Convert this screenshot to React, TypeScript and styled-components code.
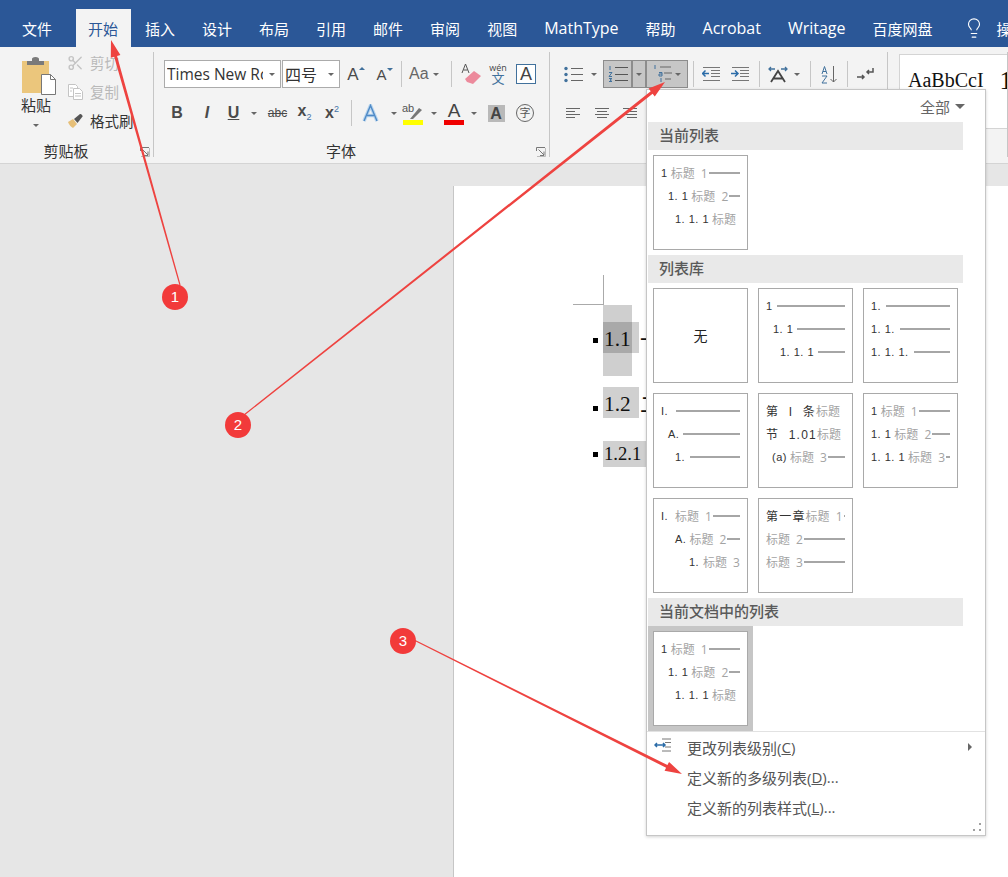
import React from 'react'
import styled, { createGlobalStyle } from 'styled-components'
import { Lightbulb, Scissors } from 'lucide-react'

const UI_FONT = `"Open Sans", "Noto Sans CJK SC", sans-serif`
const SERIF = `"Liberation Serif", "Noto Sans CJK SC", serif`

const GlobalStyle = createGlobalStyle`
html, body {
  margin: 0;
  padding: 0;
  overflow: hidden;
  background: #e6e6e6;
}
* { box-sizing: border-box; }
`

const Window = styled.div`
position: relative;
width: 1008px;
height: 877px;
overflow: hidden;
display: flex;
flex-direction: column;
font-family: ${UI_FONT};
color: #444;
`

const TabBar = styled.div`
height: 47px;
flex: none;
background: #2b5797;
display: flex;
align-items: flex-end;
gap: 2px;
padding-left: 9.5px;
overflow: hidden;
`

const Tab = styled.div<{ $active?: boolean; $gapAfter?: number; $latin?: boolean }>`
height: 38px;
padding: 0 12.5px;
flex: none;
display: flex;
align-items: center;
font-size: ${p => (p.$latin ? 16 : 15)}px;
white-space: nowrap;
margin-right: ${p => p.$gapAfter ?? 0}px;
color: ${p => (p.$active ? '#2b5797' : '#fff')};
background: ${p => (p.$active ? '#f3f3f3' : 'transparent')};
`

const HelpIcon = styled.div`
margin: 0 -3px 0 16px;
height: 38px;
display: flex;
align-items: center;
color: #fff;
`

const Ribbon = styled.div`
height: 117px;
flex: none;
display: flex;
background: #f3f3f3;
border-bottom: 1px solid #d4d4d4;
`

const Group = styled.div<{ $w: number; $pl?: number }>`
position: relative;
width: ${p => p.$w}px;
flex: none;
padding: 13px 0 0 ${p => p.$pl ?? 0}px;
&::after {
  content: '';
  position: absolute;
  right: 0;
  top: 5px;
  bottom: 6px;
  width: 1px;
  background: #c6c6c6;
}
`

const GroupLabel = styled.div`
position: absolute;
left: 0;
right: 22px;
bottom: 1px;
height: 22px;
line-height: 22px;
text-align: center;
font-size: 15px;
color: #333;
`

const Launcher = styled.svg`
position: absolute;
right: 4px;
bottom: 6px;
`

const ToolRow = styled.div<{ $mt?: number }>`
height: 28px;
display: flex;
align-items: center;
margin-top: ${p => p.$mt ?? 0}px;
`

const ClipboardBody = styled.div`
display: flex;
margin-top: -12px;
`

const PasteColumn = styled.div`
width: 67px;
padding: 8px 0 0 21px;
font-size: 15px;
color: #333;
`

const PasteLabel = styled.div`
margin-top: -2px;
line-height: 22px;
`

const PasteCaret = styled.div`
width: 30px;
height: 18px;
display: flex;
align-items: center;
justify-content: center;
`

const SmallColumn = styled.div`
display: flex;
flex-direction: column;
`

const SmallTool = styled.div<{ $muted?: boolean }>`
height: 29px;
display: flex;
align-items: center;
gap: 6px;
font-size: 14.5px;
white-space: nowrap;
color: ${p => (p.$muted ? '#b9b9b9' : '#333')};
`

const SmallIcon = styled.div`
width: 17px;
display: flex;
justify-content: center;
color: #c4c4c4;
`

const Caret = styled.span<{ $size?: number }>`
display: inline-block;
width: 0;
height: 0;
border-left: ${p => p.$size ?? 3.5}px solid transparent;
border-right: ${p => p.$size ?? 3.5}px solid transparent;
border-top: ${p => p.$size ?? 3.5}px solid #666;
`

const Combo = styled.div<{ $w: number }>`
width: ${p => p.$w}px;
height: 28px;
margin-right: 1px;
flex: none;
background: #fff;
border: 1px solid #ababab;
display: flex;
align-items: center;
justify-content: space-between;
padding: 0 5px 0 2px;
font-size: 16px;
color: #333;
overflow: hidden;
white-space: nowrap;
`

const ComboText = styled.span<{ $w: number }>`
width: ${p => p.$w}px;
font-size: 15.5px;
overflow: hidden;
`

const Tool = styled.div<{ $w: number; $on?: boolean; $ml?: number }>`
width: ${p => p.$w}px;
height: 28px;
flex: none;
margin-left: ${p => p.$ml ?? 0}px;
display: flex;
align-items: center;
justify-content: center;
background: ${p => (p.$on ? '#c6c6c6' : 'transparent')};
border: ${p => (p.$on ? '1px solid #8c8c8c' : 'none')};
`

const Divider = styled.div<{ $ml: number; $mr?: number }>`
width: 1px;
height: 26px;
flex: none;
background: #c6c6c6;
margin-left: ${p => p.$ml}px;
margin-right: ${p => p.$mr ?? 0}px;
`

const Glyph = styled.span<{ $size?: number; $bold?: boolean; $italic?: boolean; $under?: boolean; $color?: string; $strike?: boolean }>`
font-family: "Liberation Sans", sans-serif;
font-size: ${p => p.$size ?? 15}px;
font-weight: ${p => (p.$bold ? 700 : 400)};
font-style: ${p => (p.$italic ? 'italic' : 'normal')};
text-decoration: ${p => (p.$under ? 'underline' : p.$strike ? 'line-through' : 'none')};
color: ${p => p.$color ?? '#4a4a4a'};
line-height: 1;
white-space: nowrap;
`

const Sub = styled.sub`
font-size: 9px;
color: #4472a8;
font-weight: 400;
`

const Sup = styled.sup`
font-size: 9px;
color: #4472a8;
font-weight: 400;
`

const SizeGlyph = styled.div`
display: flex;
align-items: flex-start;
gap: 0;
`

const SizeArrow = styled.span<{ $down?: boolean }>`
width: 0;
height: 0;
margin-top: 1px;
border-left: 3px solid transparent;
border-right: 3px solid transparent;
border-bottom: ${p => (p.$down ? 0 : 3)}px solid #41719c;
border-top: ${p => (p.$down ? 3 : 0)}px solid #41719c;
`

const BoxedA = styled.div`
width: 20px;
height: 20px;
border: 1px solid #41719c;
background: #fff;
font-family: "Liberation Sans", sans-serif;
font-size: 18px;
line-height: 18px;
text-align: center;
color: #444;
`

const ShadedA = styled.div`
width: 17px;
height: 17px;
background: #b9b9b9;
font-family: "Liberation Sans", sans-serif;
font-weight: 700;
font-size: 16px;
line-height: 17px;
text-align: center;
color: #444;
`

const CircledChar = styled.div`
width: 18px;
height: 18px;
border: 1px solid #666;
border-radius: 50%;
font-size: 11px;
line-height: 15px;
text-align: center;
color: #555;
`

const ColorA = styled.div<{ $bar: string }>`
width: 20px;
height: 23px;
display: flex;
flex-direction: column;
align-items: center;
font-family: "Liberation Sans", sans-serif;
font-size: 19px;
line-height: 18px;
color: #444;
&::after {
  content: '';
  width: 20px;
  height: 5px;
  background: ${p => p.$bar};
}
`

const WenChar = styled.div`
display: flex;
flex-direction: column;
align-items: center;
font-size: 9px;
line-height: 8px;
color: #444;
`

const WenBottom = styled.span`
font-size: 13px;
line-height: 13px;
color: #41719c;
`

const StyleGallery = styled.div`
margin: -6px 0 0 11px;
height: 75px;
background: #fff;
border: 1px solid #d4d4d4;
border-right: none;
padding: 14px 0 0 8px;
font-family: ${SERIF};
font-size: 20px;
color: #111;
display: flex;
align-items: flex-start;
gap: 16px;
white-space: nowrap;
overflow: hidden;
`

const StyleNumber = styled.span`
font-size: 26px;
line-height: 24px;
`

const Workspace = styled.div`
flex: 1;
padding: 22px 0 0 453px;
background: #e6e6e6;
overflow: hidden;
`

const Page = styled.div`
height: 100%;
background: #fff;
border-left: 1px solid #c6c6c6;
padding-top: 136px;
position: relative;
`

const CropMark = styled.div`
width: 31px;
height: 30px;
position: absolute;
left: 119px;
top: 89px;
border-right: 1px solid #aaa;
border-bottom: 1px solid #aaa;
`

const DocLine = styled.div<{ $top: number }>`
display: flex;
align-items: center;
margin: ${p => p.$top}px 0 0 139px;
font-family: ${SERIF};
color: #111;
white-space: nowrap;
`

const Bullet = styled.span<{ $drop?: number }>`
width: 5px;
height: 5px;
background: #000;
flex: none;
margin-right: 5px;
margin-top: ${p => (p.$drop ?? 0) * 2}px;
`

const NumberMark = styled.span<{ $size: number; $h: number; $w: number; $drop?: number }>`
position: relative;
width: ${p => p.$w}px;
height: ${p => p.$h}px;
line-height: ${p => p.$h + (p.$drop ?? 0)}px;
padding-left: 1px;
font-size: ${p => p.$size}px;
background: #d0d0d0;
white-space: nowrap;
flex: none;
`

const ColumnSelect = styled.span`
position: absolute;
left: 0;
top: -17px;
width: 29px;
height: 71px;
background: rgba(0, 0, 0, 0.19);
`

const HeadingText = styled.span`
margin-left: 1px;
font-size: 21px;
font-family: "Noto Sans CJK SC", sans-serif;
`

const Menu = styled.div`
position: absolute;
left: 646px;
top: 89px;
width: 340px;
height: 747px;
background: #fff;
border: 1px solid #c6c6c6;
box-shadow: 0 1px 3px rgba(0, 0, 0, 0.18);
display: flex;
flex-direction: column;
`

const MenuFilter = styled.div`
height: 32px;
flex: none;
display: flex;
align-items: center;
justify-content: flex-end;
gap: 5px;
padding: 0 20px 0 0;
font-size: 15px;
color: #666;
`

const SectionHeader = styled.div`
height: 28px;
flex: none;
margin-left: 1px;
width: 315px;
background: #e9e9e9;
padding-left: 11px;
line-height: 26px;
font-size: 15px;
font-weight: 500;
color: #5a5a5a;
`

const Gallery = styled.div`
flex: none;
margin-left: 1px;
padding: 5px;
display: grid;
grid-template-columns: repeat(3, 95px);
gap: 10px;
`

const SelectedCell = styled.div`
flex: none;
margin-left: 1px;
width: 105px;
padding: 5px;
background: #c6c6c6;
`

const Thumb = styled.div<{ $center?: boolean }>`
width: 95px;
height: 95px;
background: #fff;
border: 1px solid #a9a9a9;
padding: ${p => (p.$center ? 0 : 5)}px 7px ${p => (p.$center ? 2 : 0)}px;
display: flex;
flex-direction: column;
justify-content: ${p => (p.$center ? 'center' : 'flex-start')};
align-items: ${p => (p.$center ? 'center' : 'stretch')};
font-size: 14px;
color: #222;
`

const ThumbRow = styled.div<{ $indent: number }>`
height: 23px;
padding-left: ${p => p.$indent}px;
display: flex;
align-items: center;
white-space: nowrap;
overflow: hidden;
`

const ThumbNum = styled.span<{ $cjk?: boolean; $w?: number }>`
flex: none;
min-width: ${p => p.$w ?? 0}px;
font-family: "Liberation Sans", "Noto Sans CJK SC", sans-serif;
font-size: ${p => (p.$cjk ? 12 : 11)}px;
letter-spacing: ${p => (p.$cjk ? 1.2 : 0.5)}px;
word-spacing: ${p => (p.$cjk ? 5 : 0)}px;
margin-right: ${p => (p.$cjk ? 0 : 3)}px;
color: #333;
`

const ThumbLabel = styled.span`
flex: none;
font-size: 12px;
color: #a3a3a3;
word-spacing: 3px;
`

const ThumbLine = styled.span`
flex: 1;
min-width: 0;
height: 2px;
margin-left: 1px;
background: #a6a6a6;
`

const MenuFooter = styled.div`
flex: 1;
position: relative;
border-top: 1px solid #e2e2e2;
`

const MenuItem = styled.div`
height: 30px;
display: flex;
align-items: center;
padding-left: 40px;
font-size: 15px;
color: #555;
position: relative;
`

const MenuItemIcon = styled.svg`
position: absolute;
left: 7px;
top: 6px;
`

const SubmenuArrow = styled.span`
position: absolute;
right: 13px;
top: 11px;
border-top: 4px solid transparent;
border-bottom: 4px solid transparent;
border-left: 4px solid #666;
`

const Grip = styled.svg`
position: absolute;
right: 3px;
bottom: 3px;
`

const Key = styled.span`
text-decoration: underline;
`

const Annotations = styled.svg`
position: absolute;
left: 0;
top: 0;
pointer-events: none;
`

const Badge = styled.div<{ $x: number; $y: number }>`
position: absolute;
left: ${p => p.$x - 13}px;
top: ${p => p.$y - 13}px;
width: 26px;
height: 26px;
border-radius: 50%;
background: #f23a3a;
color: #fff;
font-family: "Liberation Sans", sans-serif;
font-size: 15px;
line-height: 26px;
text-align: center;
`

type Row = { indent?: number; num?: string; cjk?: boolean; label?: string; line?: boolean; w?: number }

const currentList: Row[] = [
  { num: '1', label: '标题 1', line: true },
  { indent: 7, num: '1. 1', label: '标题 2', line: true },
  { indent: 14, num: '1. 1. 1', label: '标题' },
]

const libraryLists: Row[][] = [
  [
    { num: '1', line: true },
    { indent: 7, num: '1. 1', line: true },
    { indent: 14, num: '1. 1. 1', line: true },
  ],
  [
    { num: '1.', w: 11, line: true },
    { num: '1. 1.', w: 25, line: true },
    { num: '1. 1. 1.', w: 39, line: true },
  ],
  [
    { num: 'I.', w: 11, line: true },
    { indent: 7, num: 'A.', w: 11, line: true },
    { indent: 14, num: '1.', w: 11, line: true },
  ],
  [
    { num: '第 I 条', cjk: true, label: '标题' },
    { num: '节 1.01', cjk: true, label: '标题' },
    { indent: 6, num: '(a)', label: '标题 3', line: true },
  ],
  [
    { num: '1', label: '标题 1', line: true },
    { num: '1. 1', label: '标题 2', line: true },
    { num: '1. 1. 1', label: '标题 3', line: true },
  ],
  [
    { num: 'I.', w: 11, label: '标题 1', line: true },
    { indent: 14, num: 'A.', w: 11, label: '标题 2', line: true },
    { indent: 28, num: '1.', w: 11, label: '标题 3' },
  ],
  [
    { num: '第一章', cjk: true, label: '标题 1', line: true },
    { label: '标题 2', line: true },
    { label: '标题 3', line: true },
  ],
]

const ListThumb = ({ rows }: { rows: Row[] }) => (
  <Thumb>
    {rows.map((r, i) => (
      <ThumbRow key={i} $indent={r.indent ?? 0}>
        {r.num && <ThumbNum $cjk={r.cjk} $w={r.w}>{r.num}</ThumbNum>}
        {r.label && <ThumbLabel>{r.label}</ThumbLabel>}
        {r.line && <ThumbLine />}
      </ThumbRow>
    ))}
  </Thumb>
)

const PasteIcon = () => (
  <svg width="36" height="40" viewBox="0 0 36 40" style={{ display: 'block' }}>
    <rect x="1" y="5" width="27" height="32" fill="#ebc67c" />
    <path d="M6 9V5h5V3c0-1 1-2 3.500-2S18 2 18 3v2h5v4z" fill="#7a7a7a" />
    <path d="M20.500 18.500h9l5 5v15h-14z" fill="#fff" stroke="#777" />
    <path d="M29.500 18.500v5h5" fill="none" stroke="#777" />
  </svg>
)

const CopyIcon = () => (
  <svg width="17" height="18" viewBox="0 0 17 18" fill="#fff" stroke="#c4c4c4">
    <path d="M1.500 1.500h7l2 2v10h-9z" />
    <path d="M6.500 5.500h6l3 3v8h-9z" />
    <path d="M8 10.500h6M8 13h6M3 5h3M3 8h2" fill="none" />
  </svg>
)

const BrushIcon = () => (
  <svg width="17" height="16" viewBox="0 0 17 16">
    <path d="M1 9l5-3 4 5-4 4c-2-1-4-3-5-6z" fill="#e6bf78" />
    <path d="M7 6l6-5c1-.5 3 1.500 2.500 2.500L10.500 10z" fill="#555" />
  </svg>
)

const LauncherIcon = () => (
  <Launcher width="10" height="10" viewBox="0 0 10 10" fill="none" stroke="#777">
    <path d="M.5 4V.5H9" />
    <path d="M2.500 2.500L8 8M8 4.500V8.500H4" />
    <path d="M9.500 1v8.500H1" stroke="#bbb" />
  </Launcher>
)

const alignLines = {
  left: 'M1 3.500h14M1 6.500h9M1 9.500h14M1 12.500h9',
  center: 'M1 3.500h14M3 6.500h10M1 9.500h14M3 12.500h10',
  right: 'M1 3.500h14M5 6.500h10M1 9.500h14M5 12.500h10',
}

const TextLines = ({ align }: { align: keyof typeof alignLines }) => (
  <svg width="16" height="16" viewBox="0 0 16 16" fill="none" stroke="#666">
    <path d={alignLines[align]} />
  </svg>
)

const BulletsIcon = () => (
  <svg width="19" height="17" viewBox="0 0 19 17">
    <path d="M7 2.500h12M7 8.500h12M7 14.500h12" stroke="#666" />
    <g fill="#41719c">
      <circle cx="2" cy="2.500" r="1.700" />
      <circle cx="2" cy="8.500" r="1.700" />
      <circle cx="2" cy="14.500" r="1.700" />
    </g>
  </svg>
)

const NumberedIcon = () => (
  <svg width="20" height="18" viewBox="0 0 20 18">
    <path d="M7 2.500h13M7 9.500h13M7 15.500h13" stroke="#555" />
    <path d="M2 1v4M1 7.500h3L1 11.500h3M1 13.500h3l-2 1.500 2 1.500H1" stroke="#41719c" fill="none" />
  </svg>
)

const MultilevelIcon = () => (
  <svg width="22" height="20" viewBox="0 0 22 20">
    <path d="M7 3h11M11 9h8M12 15h6" stroke="#666" />
    <path d="M2 1v4" stroke="#41719c" fill="none" />
    <path d="M6 8.500h3v3.500H6v-2h3" stroke="#41719c" fill="none" />
    <path d="M8 14v4" stroke="#41719c" fill="none" />
  </svg>
)

const IndentIcon = ({ increase }: { increase?: boolean }) => (
  <svg width="18" height="15" viewBox="0 0 18 15">
    <path d="M1 .5h17M9 3.500h9M9 6.500h9M9 9.500h9M1 13.500h17" stroke="#777" />
    {increase ? (
      <path d="M0 6.500h6M4 3.500l3 3-3 3" fill="none" stroke="#2b6ca8" strokeWidth="1.500" />
    ) : (
      <path d="M7 6.500H1M3.500 3.500l-3 3 3 3" fill="none" stroke="#2b6ca8" strokeWidth="1.500" />
    )}
  </svg>
)

const AsianLayoutIcon = () => (
  <svg width="20" height="17" viewBox="0 0 20 17">
    <path d="M1 3h6M3 1L1 3l2 2M19 3h-6M17 1l2 2-2 2" fill="none" stroke="#41719c" strokeWidth="1.300" />
    <path d="M3 16L10 5l7 11M5.500 12.500h9" fill="none" stroke="#444" strokeWidth="1.800" />
  </svg>
)

const SortIcon = () => (
  <svg width="17" height="19" viewBox="0 0 17 19">
    <path d="M12.500 1v16M9.500 14l3 3 3-3" fill="none" stroke="#666" />
    <path d="M1 9l2.500-7.500L6 9M2 6.500h3" fill="none" stroke="#41719c" />
    <path d="M1 11h5l-5 7h5" fill="none" stroke="#41719c" />
  </svg>
)

const ParagraphMarkIcon = () => (
  <svg width="17" height="14" viewBox="0 0 17 14">
    <path d="M16 1v4h-6M12 3l-2 2 2 2" fill="none" stroke="#555" strokeWidth="1.500" />
    <path d="M0 10h7M5 8l2 2-2 2" fill="none" stroke="#555" strokeWidth="1.500" />
  </svg>
)

const EraserIcon = () => (
  <svg width="22" height="22" viewBox="0 0 22 22">
    <path d="M6 19l-2-3 9-8 7 5-8 8z" fill="#ec8a9c" />
    <path d="M1 10L4.500 1 8 10M2.500 7H6.500" fill="none" stroke="#555" />
  </svg>
)

const TextEffectA = () => (
  <svg width="17" height="18" viewBox="0 0 17 18">
    <path d="M2 17L8.500 1.500 15 17M5 11.500h7" fill="none" stroke="#b9d5ee" strokeWidth="3.500" />
    <path d="M2 17L8.500 1.500 15 17M5 11.500h7" fill="none" stroke="#4f8ac6" strokeWidth="1.400" />
  </svg>
)

const HighlightIcon = () => (
  <svg width="22" height="23" viewBox="0 0 22 23">
    <rect x="1" y="18" width="20" height="5" fill="#ffff00" />
    <text x="0" y="10" fontSize="11" fontFamily="Liberation Sans" fill="#555">ab</text>
    <path d="M8 17l9-11 3 2-9 9z" fill="#777" />
  </svg>
)

// the hand drawn arrows get thicker toward the head
const ArrowShape = ({ x1, y1, x2, y2 }: { x1: number; y1: number; x2: number; y2: number }) => {
  const a = Math.atan2(y2 - y1, x2 - x1)
  const len = 17
  const bx = x2 - Math.cos(a) * len
  const by = y2 - Math.sin(a) * len
  const ux = -Math.sin(a)
  const uy = Math.cos(a)
  const tail = 0.6
  const neck = 1.5
  const head = 5
  const points = [
    [x1 + ux * tail, y1 + uy * tail],
    [bx + ux * neck, by + uy * neck],
    [bx + ux * head, by + uy * head],
    [x2, y2],
    [bx - ux * head, by - uy * head],
    [bx - ux * neck, by - uy * neck],
    [x1 - ux * tail, y1 - uy * tail],
  ]
  return <polygon points={points.map(p => p.join(',')).join(' ')} fill="#ee4340" />
}

const App = () => (
  <Window>
    <GlobalStyle />
    <TabBar>
      <Tab $gapAfter={9}>文件</Tab>
      <Tab $active>开始</Tab>
      <Tab>插入</Tab>
      <Tab>设计</Tab>
      <Tab>布局</Tab>
      <Tab>引用</Tab>
      <Tab>邮件</Tab>
      <Tab>审阅</Tab>
      <Tab>视图</Tab>
      <Tab $latin>MathType</Tab>
      <Tab>帮助</Tab>
      <Tab $latin>Acrobat</Tab>
      <Tab $latin>Writage</Tab>
      <Tab>百度网盘</Tab>
      <HelpIcon><Lightbulb size={22} strokeWidth={1.2} /></HelpIcon>
      <Tab>操</Tab>
    </TabBar>

    <Ribbon>
      <Group $w={154}>
        <ClipboardBody>
          <PasteColumn>
            <PasteIcon />
            <PasteLabel>粘贴</PasteLabel>
            <PasteCaret><Caret /></PasteCaret>
          </PasteColumn>
          <SmallColumn>
            <SmallTool $muted><SmallIcon><Scissors size={18} strokeWidth={2} /></SmallIcon>剪切</SmallTool>
            <SmallTool $muted><SmallIcon><CopyIcon /></SmallIcon>复制</SmallTool>
            <SmallTool><SmallIcon><BrushIcon /></SmallIcon>格式刷</SmallTool>
          </SmallColumn>
        </ClipboardBody>
        <GroupLabel>剪贴板</GroupLabel>
        <LauncherIcon />
      </Group>

      <Group $w={396} $pl={10}>
        <ToolRow>
          <Combo $w={117}><ComboText $w={96}>Times New Roman</ComboText><Caret /></Combo>
          <Combo $w={58}>四号<Caret /></Combo>
          <Tool $w={30}><SizeGlyph><Glyph $size={17}>A</Glyph><SizeArrow /></SizeGlyph></Tool>
          <Tool $w={27}><SizeGlyph><Glyph $size={15}>A</Glyph><SizeArrow $down /></SizeGlyph></Tool>
          <Divider $ml={3} />
          <Tool $w={42} $ml={1}><Glyph $size={16} $color="#666">Aa&nbsp;</Glyph><Caret /></Tool>
          <Divider $ml={6} />
          <Tool $w={24} $ml={8}><EraserIcon /></Tool>
          <Tool $w={24} $ml={2}><WenChar>wén<WenBottom>文</WenBottom></WenChar></Tool>
          <Tool $w={24} $ml={4}><BoxedA>A</BoxedA></Tool>
        </ToolRow>
        <ToolRow $mt={11}>
          <Tool $w={26}><Glyph $bold $size={16}>B</Glyph></Tool>
          <Tool $w={34}><Glyph $bold $italic $size={16}>I</Glyph></Tool>
          <Tool $w={19}><Glyph $bold $under $size={16}>U</Glyph></Tool>
          <Tool $w={22}><Caret /></Tool>
          <Tool $w={25}><Glyph $size={12} $strike>abc</Glyph></Tool>
          <Tool $w={29}><Glyph $bold $size={16}>x<Sub>2</Sub></Glyph></Tool>
          <Tool $w={26}><Glyph $bold $size={16}>x<Sup>2</Sup></Glyph></Tool>
          <Divider $ml={6} />
          <Tool $w={36}><TextEffectA /></Tool>
          <Tool $w={12}><Caret /></Tool>
          <Tool $w={24} $ml={1}><HighlightIcon /></Tool>
          <Tool $w={18}><Caret /></Tool>
          <Tool $w={22}><ColorA $bar="#f00000">A</ColorA></Tool>
          <Tool $w={18}><Caret /></Tool>
          <Tool $w={24} $ml={1}><ShadedA>A</ShadedA></Tool>
          <Tool $w={34}><CircledChar>字</CircledChar></Tool>
        </ToolRow>
        <GroupLabel>字体</GroupLabel>
        <LauncherIcon />
      </Group>

      <Group $w={338} $pl={9}>
        <ToolRow>
          <Tool $w={28}><BulletsIcon /></Tool>
          <Tool $w={14}><Caret /></Tool>
          <Tool $w={29} $on $ml={2}><NumberedIcon /></Tool>
          <Tool $w={14} $on><Caret /></Tool>
          <Tool $w={42} $on><MultilevelIcon /><Caret /></Tool>
          <Divider $ml={5} />
          <Tool $w={26} $ml={4}><IndentIcon /></Tool>
          <Tool $w={28} $ml={2}><IndentIcon increase /></Tool>
          <Divider $ml={5} />
          <Tool $w={26} $ml={5}><AsianLayoutIcon /></Tool>
          <Tool $w={12}><Caret /></Tool>
          <Divider $ml={7} />
          <Tool $w={36}><SortIcon /></Tool>
          <Divider $ml={0} />
          <Tool $w={35}><ParagraphMarkIcon /></Tool>
        </ToolRow>
        <ToolRow $mt={11}>
          <Tool $w={28}><TextLines align="left" /></Tool>
          <Tool $w={29}><TextLines align="center" /></Tool>
          <Tool $w={28}><TextLines align="right" /></Tool>
        </ToolRow>
      </Group>

      <Group $w={120}>
        <StyleGallery>
          <span>AaBbCcI</span>
          <StyleNumber>1</StyleNumber>
        </StyleGallery>
      </Group>
    </Ribbon>

    <Workspace>
      <Page>
        <CropMark />
        <DocLine $top={0}>
          <Bullet $drop={3} />
          <NumberMark $size={21.3} $h={31} $w={36} $drop={4}>
            <ColumnSelect />
            1.1
          </NumberMark>
          <HeadingText>一级标题</HeadingText>
        </DocLine>
        <DocLine $top={34}>
          <Bullet $drop={6} />
          <NumberMark $size={21.3} $h={31} $w={36} $drop={4}>1.2</NumberMark>
          <HeadingText>二级标题</HeadingText>
        </DocLine>
        <DocLine $top={23}>
          <Bullet />
          <NumberMark $size={18.67} $h={26} $w={43}>1.2.1</NumberMark>
        </DocLine>
      </Page>
    </Workspace>

    <Menu>
      <MenuFilter>全部<Caret $size={5} /></MenuFilter>
      <SectionHeader>当前列表</SectionHeader>
      <Gallery><ListThumb rows={currentList} /></Gallery>
      <SectionHeader>列表库</SectionHeader>
      <Gallery>
        <Thumb $center>无</Thumb>
        {libraryLists.map((rows, i) => <ListThumb key={i} rows={rows} />)}
      </Gallery>
      <SectionHeader>当前文档中的列表</SectionHeader>
      <SelectedCell><ListThumb rows={currentList} /></SelectedCell>
      <MenuFooter>
        <MenuItem>
          <MenuItemIcon width="18" height="14" viewBox="0 0 18 14">
            <path d="M8 1h9M11 4.500h6M11 9h6M8 13h9" stroke="#777" />
            <path d="M1 7h10M3 5L1 7l2 2M9 5l2 2-2 2" fill="none" stroke="#2b6ca8" strokeWidth="1.500" />
          </MenuItemIcon>
          更改列表级别(<Key>C</Key>)
          <SubmenuArrow />
        </MenuItem>
        <MenuItem>定义新的多级列表(<Key>D</Key>)...</MenuItem>
        <MenuItem>定义新的列表样式(<Key>L</Key>)...</MenuItem>
        <Grip width="9" height="9" viewBox="0 0 9 9" fill="#a0a0a0">
          <rect x="6" y="0" width="2" height="2" />
          <rect x="0" y="6" width="2" height="2" />
          <rect x="6" y="6" width="2" height="2" />
        </Grip>
      </MenuFooter>
    </Menu>

    <Annotations width="1008" height="877" viewBox="0 0 1008 877">
      <ArrowShape x1={180} y1={285} x2={111} y2={40} />
      <ArrowShape x1={244} y1={415} x2={665} y2={82} />
      <ArrowShape x1={414} y1={640} x2={682} y2={774} />
    </Annotations>
    <Badge $x={175} $y={297}>1</Badge>
    <Badge $x={238} $y={425}>2</Badge>
    <Badge $x={403} $y={641}>3</Badge>
  </Window>
)

export default App
